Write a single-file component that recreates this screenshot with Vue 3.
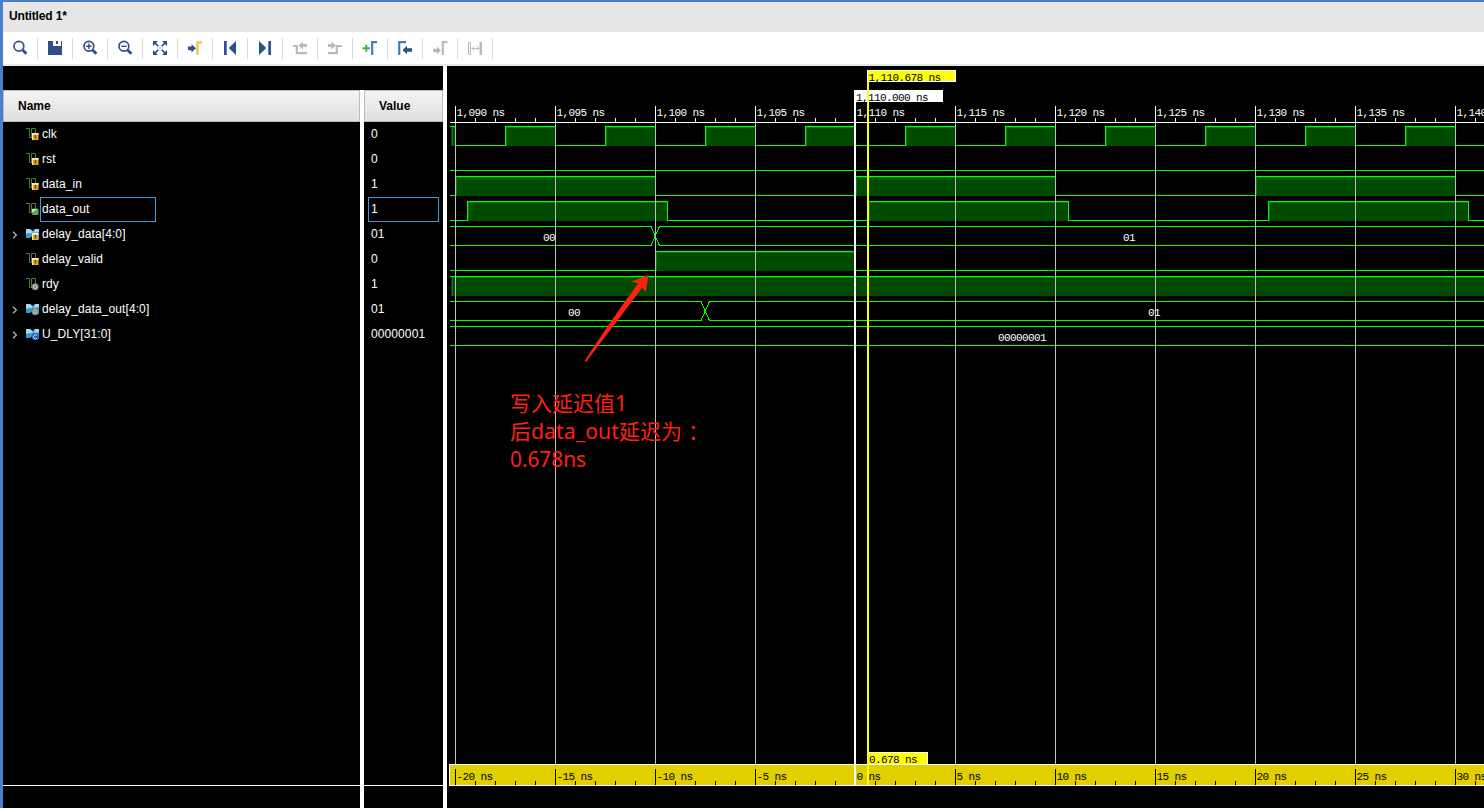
<template>
  <div class="wave-window">
    <header class="title-bar">Untitled 1*</header>

    <nav class="toolbar">
      <button
        v-for="tool in tools"
        :key="tool.id"
        type="button"
        class="tool"
        :title="tool.id"
      >
        <svg width="16" height="16" viewBox="0 0 16 16">
          <path
            v-for="(shape, index) in tool.shapes"
            :key="index"
            :d="shape.d"
            :fill="shape.fill || 'none'"
            :stroke="shape.stroke || 'none'"
            :stroke-width="shape.width || 1"
          />
        </svg>
      </button>
    </nav>

    <main class="panes">
      <section class="pane name-pane">
        <div class="column-header">Name</div>
        <ul class="rows">
          <li v-for="signal in signals" :key="signal.name" class="row">
            <span class="expander">
              <svg v-if="signal.bus" width="6" height="8" viewBox="0 0 6 8">
                <path d="M1 .8 4.4 4 1 7.2" fill="none" stroke="#b4b4b4" stroke-width="1.3" />
              </svg>
            </span>
            <svg class="signal-icon" width="13" height="13" viewBox="0 0 13 13">
              <template v-if="signal.bus">
                <path d="M0 1h4l2.500 2 2.500-2h4v10H9L6.500 8l-2.500 2H0z" fill="#3a97d6" />
                <path d="M0 1h4l2.500 2v2L0 5.500zM9 1h4v3l-5 1z" fill="#a6d6f5" />
              </template>
              <path
                v-else
                d="M0 .5h3.500v9H6M5.500 10V.5h4V6"
                fill="none"
                stroke="#4c7d3c"
              />
              <template v-if="signal.badge === 'in'">
                <rect x="6" y="5" width="6.500" height="7" fill="#e8a91c" />
                <path d="M6 5h6.500v2H6zM6 5h1v7H6z" fill="#fbe9b8" />
                <path d="M8.700 6.800h1.500v3.800H8.700z" fill="#6b4b10" />
              </template>
              <template v-else-if="signal.badge === 'out'">
                <rect x="6" y="5.500" width="6.500" height="6.500" rx="1" fill="#51b04a" />
                <path d="M6 6h5.500L7 9H6z" fill="#c3ecb9" />
              </template>
              <template v-else-if="signal.badge === 'param'">
                <circle cx="9.200" cy="8.800" r="3.500" fill="#2c56b0" />
                <path d="M11 7.500a2 2 0 1 0 0 2.600" fill="none" stroke="#dce8fb" />
              </template>
              <template v-else>
                <circle cx="9.200" cy="8.700" r="3.500" fill="#7d7d7d" />
                <circle cx="9.200" cy="8.700" r="1.800" fill="none" stroke="#d8d8d8" />
              </template>
            </svg>
            <span class="signal-name" :class="{ selected: signal.selected }">
              {{ signal.name }}
            </span>
          </li>
        </ul>
      </section>

      <div class="divider short"></div>

      <section class="pane value-pane">
        <div class="column-header">Value</div>
        <ul class="rows">
          <li v-for="signal in signals" :key="signal.name" class="row">
            <span class="signal-value" :class="{ selected: signal.selected }">
              {{ signal.value }}
            </span>
          </li>
        </ul>
      </section>

      <div class="divider"></div>

      <section class="wave-pane">
        <svg width="1037" height="742" viewBox="447 66 1037 742">
          <!-- digital traces -->
          <g shape-rendering="crispEdges">
            <g v-for="trace in traces" :key="trace.top">
              <path :d="trace.line" class="trace" />
              <template v-for="pulse in trace.pulses" :key="pulse.x">
                <rect
                  :x="pulse.x"
                  :y="trace.top"
                  :width="pulse.width"
                  height="20"
                  class="pulse"
                />
                <path
                  :d="`M${pulse.x + 1.5} ${trace.top + 20}v-18.5h${pulse.width - 2}`"
                  class="bevel"
                />
                <path :d="pulse.outline" class="trace" />
              </template>
            </g>
            <path v-for="bus in busPaths" :key="bus" :d="bus" class="trace" />
          </g>

          <!-- time grid and top ruler -->
          <g shape-rendering="crispEdges">
            <rect
              v-for="mark in marks"
              :key="mark.x"
              :x="mark.x"
              y="123"
              width="1"
              height="642"
              class="grid-line"
            />
            <rect x="450" y="122" width="1034" height="1" fill="#fff" />
            <rect
              v-for="mark in marks"
              :key="mark.x"
              :x="mark.x"
              y="106"
              width="1"
              height="17"
              fill="#fff"
            />
            <rect
              v-for="x in minorTicks"
              :key="x"
              :x="x"
              y="118"
              width="1"
              height="4"
              fill="#fff"
            />
          </g>
          <text
            v-for="mark in marks"
            :key="mark.x"
            :x="mark.x + 1.5"
            y="116"
            class="mono light"
          >{{ mark.top }}</text>

          <text
            v-for="label in busLabels"
            :key="label.x"
            :x="label.x"
            :y="label.y"
            class="mono light"
          >{{ label.text }}</text>

          <!-- relative ruler -->
          <g shape-rendering="crispEdges">
            <rect x="449" y="764" width="1035" height="22" fill="#fff" />
            <rect x="450" y="765" width="1034" height="20" fill="#e1cf00" />
            <rect
              v-for="mark in marks"
              :key="mark.x"
              :x="mark.x"
              y="769"
              width="1"
              height="16"
            />
            <rect
              v-for="x in minorTicks"
              :key="x"
              :x="x"
              y="781"
              width="1"
              height="4"
            />
          </g>
          <text
            v-for="mark in marks"
            :key="mark.x"
            :x="mark.x + 1.5"
            y="780"
            class="mono"
          >{{ mark.bottom }}</text>

          <!-- marker and cursor -->
          <g shape-rendering="crispEdges">
            <rect x="854" y="90" width="2" height="696" fill="#fff" />
            <rect x="854" y="90" width="89" height="12" fill="#fff" />
          </g>
          <text x="856" y="101" class="mono">1,110.000 ns</text>
          <g shape-rendering="crispEdges">
            <rect x="867" y="70" width="2" height="715" fill="#ff0" />
            <rect x="867" y="70" width="89" height="12" fill="#fff" />
            <rect x="868" y="71" width="87" height="10" fill="#ff0" />
            <rect x="868" y="752" width="60" height="13" fill="#fff" />
            <rect x="868" y="753" width="59" height="11" fill="#ff0" />
          </g>
          <text x="868.5" y="81" class="mono">1,110.678 ns</text>
          <text x="869" y="763" class="mono">0.678 ns</text>

          <!-- annotation -->
          <path
            d="M648.5 275 631.5 281.5 638 283.5C620 308 600 337 584.7 361l1.3 1C605 337 624 312 642.3 287.6L645.8 292z"
            class="note"
          />
          <text x="510" y="411" class="note">写入延迟值</text>
          <text x="615" y="411" class="note">1</text>
          <text x="510" y="439" class="note">后</text>
          <text
            x="531"
            y="439"
            class="note"
            textLength="88"
            lengthAdjust="spacingAndGlyphs"
          >data_out</text>
          <text x="619" y="439" class="note">延迟为</text>
          <text x="688" y="439" class="note">：</text>
          <text
            x="510"
            y="467"
            class="note"
            textLength="76"
            lengthAdjust="spacingAndGlyphs"
          >0.678ns</text>
        </svg>
      </section>
    </main>
  </div>
</template>

<script setup>
const navy = '#304f86'
const gray = '#bababa'
const blue = '#3a83b7'

const lens = { d: 'M11.8 6.3a4.9 4.9 0 1 1-9.8 0a4.9 4.9 0 1 1 9.8 0z', stroke: navy, width: 1.7 }
const handle = { d: 'M10.6 10 14.4 13.8', stroke: navy, width: 2.8 }

const tools = [
  { id: 'Search', shapes: [lens, handle] },
  {
    id: 'Save',
    shapes: [{ d: 'M1 1h5v5h8V1h1v14H1zM9 1h2v3H9z', fill: navy }]
  },
  {
    id: 'Zoom In',
    shapes: [lens, handle, { d: 'M4.2 6.3h5.4M6.9 3.6v5.4', stroke: navy, width: 1.4 }]
  },
  {
    id: 'Zoom Out',
    shapes: [lens, handle, { d: 'M4.2 6.3h5.4', stroke: navy, width: 1.4 }]
  },
  {
    id: 'Zoom Fit',
    shapes: [
      { d: 'M1 1h5L1 6zM15 1v5L10 1zM1 15v-5l5 5zM15 15h-5l5-5z', fill: navy },
      { d: 'M2 2 6.2 6.2M14 2 9.8 6.2M2 14 6.2 9.8M14 14 9.8 9.8', stroke: navy, width: 1.7 }
    ]
  },
  {
    id: 'Go to Cursor',
    shapes: [
      { d: 'M1 6.5h3.5V4.2L9 8.3l-4.5 4.1v-2.2H1z', fill: navy },
      { d: 'M10.5 15V2.5H15', stroke: '#e4c866', width: 2.6 }
    ]
  },
  {
    id: 'Go to Time 0',
    shapes: [{ d: 'M2 1h2.7v14H2zM14 1v14L6.8 8z', fill: navy }]
  },
  {
    id: 'Go to Last Time',
    shapes: [{ d: 'M11.3 1H14v14h-2.7zM2 1l7.2 7L2 15z', fill: navy }]
  },
  {
    id: 'Previous Transition',
    shapes: [
      { d: 'M1 6h3.8v7.2H15', stroke: gray, width: 2.2 },
      { d: 'M6.5 5.5 11 1.5V4h4v3h-4v2.5z', fill: gray }
    ]
  },
  {
    id: 'Next Transition',
    shapes: [
      { d: 'M1 13.2h8.8V6H15', stroke: gray, width: 2.2 },
      { d: 'M9 5.5 4.5 1.500V4H1v3h3.5v2.5z', fill: gray }
    ]
  },
  {
    id: 'Add Marker',
    shapes: [
      { d: 'M.7 8.2H8M4.300 4.700v7', stroke: '#3faf49', width: 2 },
      { d: 'M10.200 15V2.200H15', stroke: blue, width: 2.2 }
    ]
  },
  {
    id: 'Previous Marker',
    shapes: [
      { d: 'M2.200 15V2.200H9', stroke: blue, width: 2.2 },
      { d: 'M5.500 10 10 5.700v2.500h5v3.600h-5v2.500z', fill: navy }
    ]
  },
  {
    id: 'Next Marker',
    shapes: [
      { d: 'M10.800 15V2.200H15.500', stroke: gray, width: 2.2 },
      { d: 'M9 10.500 5 6.500v2.300H1v3.500h4v2.300z', fill: gray }
    ]
  },
  {
    id: 'Swap Cursors',
    shapes: [
      { d: 'M1.500 2.500h2v12h-2z', stroke: gray },
      { d: 'M12.500 2H15v13h-2.500z', fill: gray },
      { d: 'M5 8.500h7M7 6.500 5 8.500l2 2M10 6.500l2 2-2 2', stroke: gray }
    ]
  }
]

const signals = [
  { name: 'clk', value: '0', badge: 'in' },
  { name: 'rst', value: '0', badge: 'in' },
  { name: 'data_in', value: '1', badge: 'in' },
  { name: 'data_out', value: '1', badge: 'out', selected: true },
  { name: 'delay_data[4:0]', value: '01', badge: 'in', bus: true },
  { name: 'delay_valid', value: '0', badge: 'in' },
  { name: 'rdy', value: '1', badge: 'reg' },
  { name: 'delay_data_out[4:0]', value: '01', badge: 'reg', bus: true },
  { name: 'U_DLY[31:0]', value: '00000001', badge: 'param', bus: true }
]

const waveStart = 450
const waveEnd = 1484

// One entry every 5 ns, 20 px per ns
const marks = Array.from({ length: 11 }, (_, index) => ({
  x: 455 + index * 100,
  top: `${(1090 + index * 5).toLocaleString('en-US')} ns`,
  bottom: `${-20 + index * 5} ns`
}))

const minorTicks = marks
  .flatMap(({ x }) => [x + 20, x + 40, x + 60, x + 80])
  .filter((x) => x < waveEnd)

// Builds the outline of each high level and the low segments between them
const createTrace = (top, highs) => {
  const low = top + 19.5
  let position = waveStart
  let line = ''

  const pulses = highs.map(([from, to]) => {
    if (from > waveStart + 1) {
      line += `M${position} ${low}H${from}`
    }

    position = to

    return {
      x: from,
      width: to - from,
      outline: from <= waveStart + 1
        ? `M${waveStart} ${top + 0.5}H${to + 0.5}V${top + 20}`
        : `M${from + 0.5} ${top + 20}V${top + 0.5}H${to + 0.5}V${top + 20}`
    }
  })

  if (position < waveEnd) {
    line += `M${position} ${low}H${waveEnd}`
  }

  return { top, line, pulses }
}

const clockHighs = [[451, 455]]

for (let x = 505; x < waveEnd; x += 100) {
  clockHighs.push([x, x + 50])
}

const traces = [
  createTrace(126, clockHighs),
  createTrace(151, []),
  createTrace(176, [[455, 655], [855, 1055], [1255, 1455]]),
  createTrace(201, [[467, 667], [868, 1068], [1268, 1468]]),
  createTrace(251, [[655, 854]]),
  createTrace(276, [[451, 1490]])
]

const createBus = (top, change) => {
  const high = top + 0.5
  const low = top + 19.5

  if (!change) {
    return `M${waveStart} ${high}H${waveEnd}M${waveStart} ${low}H${waveEnd}`
  }

  const left = change - 4
  const right = change + 5

  return (
    `M${waveStart} ${high}H${left}L${right - 0.5} ${low}H${waveEnd}` +
    `M${waveStart} ${low}H${left}L${right - 0.5} ${high}H${waveEnd}`
  )
}

const busPaths = [createBus(226, 655), createBus(301, 705), createBus(326)]

const busLabels = [
  { x: 543, y: 241, text: '00' },
  { x: 1123, y: 241, text: '01' },
  { x: 568, y: 316, text: '00' },
  { x: 1148, y: 316, text: '01' },
  { x: 998, y: 341, text: '00000001' }
]
</script>

<style>
body {
  margin: 0;
  overflow: hidden;
  background: #000;
}
</style>

<style scoped>
.wave-window {
  display: flex;
  box-sizing: border-box;
  width: 1484px;
  height: 808px;
  flex-direction: column;
  background: #fff;
  border-top: 2px solid #4a7ecf;
  border-left: 3px solid #4a7ecf;
  color: #000;
  font-family: "Liberation Sans", Arial, sans-serif;
  font-size: 12px;
}

.title-bar {
  height: 30px;
  padding-left: 6px;
  background: #e6e6e6;
  font-weight: bold;
  letter-spacing: -0.15px;
  line-height: 28px;
}

.toolbar {
  display: flex;
  height: 32px;
  align-items: center;
  border-bottom: 2px solid #e8e8e8;
}

.tool {
  display: flex;
  box-sizing: border-box;
  width: 35px;
  height: 21px;
  align-items: center;
  justify-content: center;
  padding: 0;
  background: none;
  border: 0;
  border-right: 1px solid #d9d9d9;
}

.panes {
  display: flex;
  height: 742px;
  background: #000;
}

.pane {
  display: flex;
  box-sizing: border-box;
  flex-direction: column;
  background: linear-gradient(#fff, #fff) 0 719px / 100% 1px no-repeat #000;
  padding-top: 24px;
}

.name-pane {
  width: 357px;
}

.value-pane {
  width: 79px;
}

.divider {
  width: 4px;
  background: #fff;
}

.divider.short {
  margin-top: 24px;
}

.column-header {
  box-sizing: border-box;
  height: 32px;
  padding-left: 14px;
  background: linear-gradient(#f4f4f4, #dfdfe1);
  border: 1px solid #bcbcbc;
  font-weight: bold;
  line-height: 30px;
}

.rows {
  margin: 0;
  padding: 0;
  list-style: none;
}

.row {
  display: flex;
  height: 25px;
  align-items: center;
  color: #fff;
  letter-spacing: 0.1px;
}

.expander {
  display: flex;
  width: 14px;
  padding-left: 9px;
}

.signal-name,
.signal-value {
  box-sizing: border-box;
  height: 25px;
  border: 1px solid transparent;
  line-height: 22px;
}

.signal-name {
  width: 116px;
  margin-left: 1px;
  padding-left: 1px;
  white-space: nowrap;
}

.signal-value {
  width: 71px;
  margin-left: 4px;
  padding-left: 2px;
}

.signal-name.selected,
.signal-value.selected {
  border-color: #4596d8;
}

.wave-pane {
  width: 1037px;
  background: #000;
}

.wave-pane svg {
  display: block;
}

.trace {
  fill: none;
  stroke: #0f0;
}

.pulse {
  fill: #004b00;
}

.bevel {
  fill: none;
  stroke: #008000;
}

.grid-line {
  fill: #bebebe;
}

.mono {
  font-family: "Liberation Mono", monospace;
  font-size: 11px;
  letter-spacing: -0.6px;
  white-space: pre;
}

.light {
  fill: #fff;
}

.note {
  fill: #ff2010;
  font-family: "Noto Sans", "Noto Sans CJK SC", sans-serif;
  font-size: 21px;
}
</style>
